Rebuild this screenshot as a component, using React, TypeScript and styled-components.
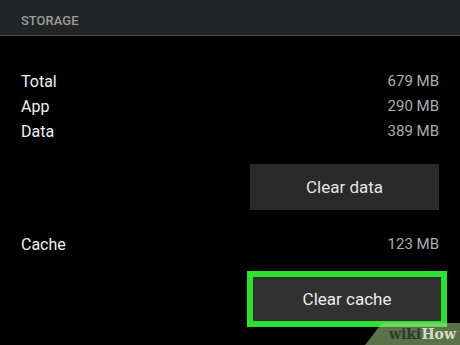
import styled, { createGlobalStyle } from "styled-components";

const GlobalStyle = createGlobalStyle`
  html, body {
    margin: 0;
    padding: 0;
    background: #000;
  }
  body {
    font-family: Roboto, "Noto Sans", sans-serif;
    width: 460px;
    height: 345px;
    overflow: hidden;
  }
`;

const Screen = styled.div`
  position: relative;
  width: 460px;
  height: 345px;
  background: #000;
  overflow: hidden;
`;

const Header = styled.div`
  height: 36px;
  box-sizing: border-box;
  padding: 13px 21px 0;
  background: #232426;
  border-bottom: 1px solid #4c4c4e;
  color: #9b9b9b;
  font-size: 13px;
  font-weight: 500;
  line-height: 16px;
`;

const Content = styled.div`
  display: flex;
  flex-direction: column;
  padding: 33px 21px 0;
`;

const Row = styled.div<{ $gapTop?: number }>`
  display: flex;
  justify-content: space-between;
  align-items: center;
  height: 25px;
  line-height: 25px;
  font-size: 16px;
  margin-top: ${(p) => p.$gapTop ?? 0}px;
`;

const Label = styled.span`
  color: #f0f0f0;
`;

const Value = styled.span`
  color: #aeaeae;
  font-size: 15px;
`;

const Button = styled.div`
  width: 189px;
  height: 46px;
  display: flex;
  align-items: center;
  justify-content: center;
  background: #2a2a2a;
  color: #e4e4e4;
  font-size: 17px;
  align-self: flex-end;
  margin-top: 20px;
`;

const Highlight = styled.div`
  align-self: flex-end;
  margin-top: 14px;
  margin-right: -8px;
  border: 6px solid #30e030;
`;

const CacheButton = styled(Button)`
  margin-top: 0;
  width: 188px;
  height: 44px;
  background: #313131;
  color: #ececec;
`;

const Watermark = styled.div`
  position: absolute;
  right: 0;
  bottom: 0;
  width: 95px;
  height: 22px;
  background: rgba(165, 205, 135, 0.55);
  clip-path: polygon(17px 0, 100% 0, 100% 100%, 0 100%);
  display: flex;
  align-items: center;
  justify-content: flex-end;
  padding-right: 4px;
  box-sizing: border-box;
  font-family: "DejaVu Serif", "Liberation Serif", serif;
  font-weight: bold;
  font-size: 14px;
`;

const Wiki = styled.span`
  color: #2f3a2b;
`;

const How = styled.span`
  color: #d2dec9;
`;

const rows = [
  { label: "Total", value: "679 MB" },
  { label: "App", value: "290 MB" },
  { label: "Data", value: "389 MB" },
];

export default function App() {
  return (
    <>
      <GlobalStyle />
      <Screen>
        <Header>STORAGE</Header>
        <Content>
          {rows.map((r) => (
            <Row key={r.label}>
              <Label>{r.label}</Label>
              <Value>{r.value}</Value>
            </Row>
          ))}
          <Button>Clear data</Button>
          <Row $gapTop={22}>
            <Label>Cache</Label>
            <Value>123 MB</Value>
          </Row>
          <Highlight>
            <CacheButton>Clear cache</CacheButton>
          </Highlight>
        </Content>
        <Watermark>
          <Wiki>wiki</Wiki>
          <How>How</How>
        </Watermark>
      </Screen>
    </>
  );
}
